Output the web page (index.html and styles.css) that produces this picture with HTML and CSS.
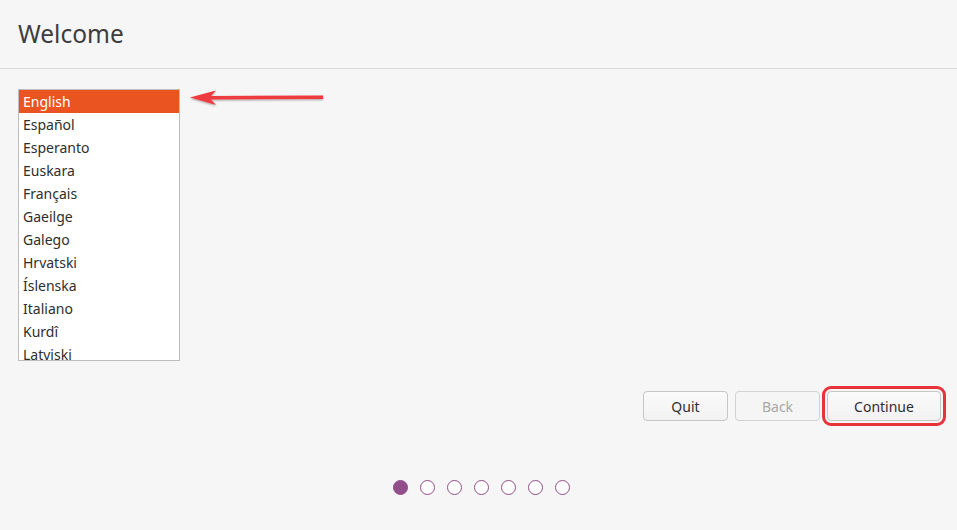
FILE: index.html
```html
<!DOCTYPE html>
<html>
<head>
<meta charset="utf-8">
<link rel="stylesheet" href="styles.css">
</head>
<body>
<header class="header"><h1 class="title">Welcome</h1></header>
<main class="main">
  <div class="list-area">
    <ul class="langs">
      <li class="lang selected">English</li>
      <li class="lang">Español</li>
      <li class="lang">Esperanto</li>
      <li class="lang">Euskara</li>
      <li class="lang">Français</li>
      <li class="lang">Gaeilge</li>
      <li class="lang">Galego</li>
      <li class="lang">Hrvatski</li>
      <li class="lang">Íslenska</li>
      <li class="lang">Italiano</li>
      <li class="lang">Kurdî</li>
      <li class="lang">Latviski</li>
    </ul>
    <svg class="arrow" width="140" height="22" viewBox="0 0 140 22">
      <defs>
        <filter id="sh" x="-10%" y="-50%" width="120%" height="200%">
          <feDropShadow dx="0" dy="1" stdDeviation="0.8" flood-color="#000" flood-opacity="0.35"/>
        </filter>
      </defs>
      <g filter="url(#sh)">
        <path d="M2 9.5 L28 2.5 L23 8 L135 7.5 L135 11 L23 11.5 L28 17 Z" fill="#ee3a3f"/>
      </g>
    </svg>
  </div>
  <div class="actions">
    <button class="btn">Quit</button>
    <button class="btn disabled">Back</button>
    <button class="btn primary">Continue</button>
  </div>
  <div class="dots">
    <span class="dot on"></span>
    <span class="dot"></span>
    <span class="dot"></span>
    <span class="dot"></span>
    <span class="dot"></span>
    <span class="dot"></span>
    <span class="dot"></span>
  </div>
</main>
</body>
</html>
```
FILE: styles.css
```css
html, body {
  margin: 0;
  padding: 0;
  background: #f6f6f6;
  font-family: "Noto Sans", "DejaVu Sans", sans-serif;
  color: #3c3c3c;
}
.header {
  height: 68px;
  border-bottom: 1px solid #dadada;
  display: flex;
  align-items: center;
  padding-left: 18px;
}
.title {
  margin: 0;
  font-weight: 400;
  font-size: 24.5px;
  color: #3d3d3d;
  position: relative;
  top: -1px;
}
.main {
  padding: 20px 12px 0 18px;
}
.list-area {
  position: relative;
  height: 272px;
}
.langs {
  list-style: none;
  margin: 0;
  padding: 0;
  width: 160px;
  height: 270px;
  overflow: hidden;
  border: 1px solid #bdbdbd;
  background: #fff;
}
.lang {
  height: 23px;
  line-height: 23px;
  padding-left: 4px;
  font-size: 14px;
  color: #2e2e2e;
}
.lang.selected {
  background: #e95420;
  color: #fff;
}
.arrow {
  position: absolute;
  left: 170px;
  top: -1px;
}
.actions {
  display: flex;
  justify-content: flex-end;
  gap: 7px;
  margin-top: 30px;
  padding-right: 2px;
}
.btn {
  height: 30px;
  width: 85px;
  font-family: inherit;
  font-size: 14px;
  color: #2f2f2f;
  background: linear-gradient(#fafafa, #f2f2f2);
  border: 1px solid #c6c6c6;
  border-radius: 4px;
  padding: 0;
}
.btn.disabled {
  color: #a8a8a8;
  background: #f5f5f5;
  border-color: #d2d2d2;
}
.btn.primary {
  width: 114px;
  margin-right: 2px;
  outline: 3px solid #e9333b;
  outline-offset: 2px;
}
.dots {
  display: flex;
  justify-content: center;
  gap: 12px;
  margin-top: 59px;
}
.dot {
  width: 13px;
  height: 13px;
  border: 1.5px solid #924d8b;
  border-radius: 50%;
  background: #fff;
}
.dot.on {
  background: #924d8b;
}
```
